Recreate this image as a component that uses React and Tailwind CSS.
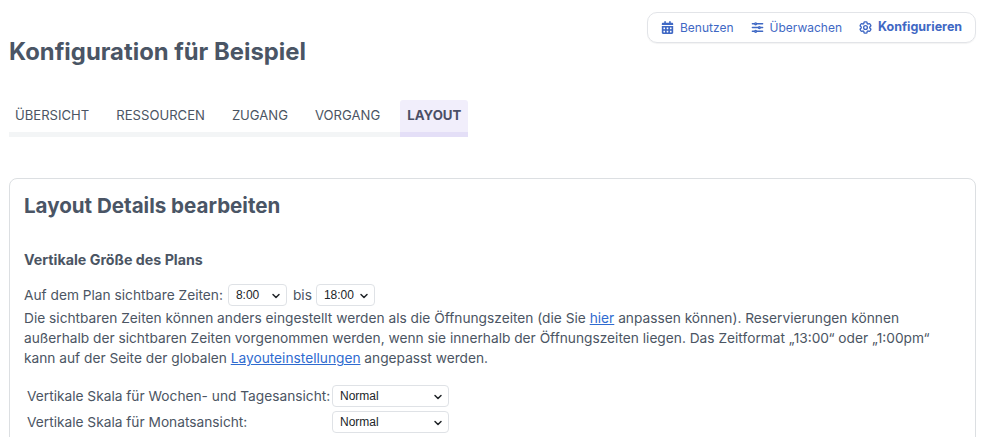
import React from 'react';
import { ChevronDown } from 'lucide-react';
import { FaCalendarDays } from 'react-icons/fa6';
import { HiOutlineAdjustmentsHorizontal, HiOutlineCog6Tooth } from 'react-icons/hi2';

const tabs = ['ÜBERSICHT', 'RESSOURCEN', 'ZUGANG', 'VORGANG'];

const Picker = ({ value, className }) => (
  <span className={`relative inline-block align-middle ${className}`}>
    <select
      defaultValue={value}
      className="appearance-none w-full h-full bg-white border border-[#dfe2e6] rounded-[4px] pl-[7px] text-[12px] text-[#212529] font-['Liberation_Sans',sans-serif] outline-none"
    >
      <option>{value}</option>
    </select>
    <ChevronDown size={12} strokeWidth={3} className="absolute right-[5px] top-[6px] text-[#212529] pointer-events-none" />
  </span>
);

const App = () => {
  return (
    <div className="h-[437px] overflow-hidden bg-white pl-[9px] pr-2 text-[13.72px] text-[#4b5563] font-['Inter',sans-serif]">
      <div className="flex justify-between items-start">
        <h1 className="mt-[37px] text-[23.85px] leading-[29px] font-bold text-[#4a5565]">Konfiguration für Beispiel</h1>
        <nav className="mt-3 h-[31px] w-[329px] flex items-center gap-[16px] pl-[13px] border border-[#e2e4e8] rounded-[10px] shadow-[0_1px_1px_rgba(0,0,0,0.05)] text-[12px] text-[#3f68c4]">
          <span className="flex items-center gap-[6px]"><FaCalendarDays size={13} />Benutzen</span>
          <span className="flex items-center gap-[5px]"><HiOutlineAdjustmentsHorizontal size={15} strokeWidth={2.2} />Überwachen</span>
          <span className="flex items-center gap-[5px] font-bold text-[12.5px]"><HiOutlineCog6Tooth size={15} strokeWidth={2.2} />Konfigurieren</span>
        </nav>
      </div>

      <div className="mt-[34px] w-[459px] h-[37px] flex items-stretch border-b-[5px] border-[#f3f5f6]">
        {tabs.map((tab) => (
          <span key={tab} className="pl-[6px] pr-[21px] flex items-center text-[13.1px] text-[#4b5563]">{tab}</span>
        ))}
        <span className="-mb-[5px] -ml-[1px] px-[7px] flex items-center text-[13.25px] font-bold bg-[#f1eefb] border-b-[5px] border-[#e4dff7] rounded-t-[3px] text-[#4a4e66]">LAYOUT</span>
      </div>

      <section className="mt-[41px] h-[300px] border border-[#dcdfe2] rounded-[8px] pl-[14px] pr-4 pt-[14px]">
        <h2 className="text-[20.55px] leading-[26px] font-bold text-[#4a5565]">Layout Details bearbeiten</h2>
        <h3 className="mt-[32px] text-[14.25px] leading-[18px] font-bold text-[#4b5563]">Vertikale Größe des Plans</h3>

        <div className="mt-[15px] h-[22px] flex items-center">
          <span>Auf dem Plan sichtbare Zeiten:</span>
          <Picker value="8:00" className="ml-[5px] w-[59px] h-[22px]" />
          <span className="ml-[6px] mr-[4px]">bis</span>
          <Picker value="18:00" className="w-[59px] h-[22px]" />
        </div>
        <p className="mt-[2px] leading-[20px] w-[930px]">
          Die sichtbaren Zeiten können anders eingestellt werden als die Öffnungszeiten (die Sie <a href="#" className="text-[#2f6bd0] underline">hier</a> anpassen können). Reservierungen können außerhalb der sichtbaren Zeiten vorgenommen werden, wenn sie innerhalb der Öffnungszeiten liegen. Das Zeitformat „13:00“ oder „1:00pm“ kann auf der Seite der globalen <a href="#" className="text-[#2f6bd0] underline">Layouteinstellungen</a> angepasst werden.
        </p>

        <div className="mt-[17px] grid grid-cols-[305px_117px] gap-y-[4px] pl-[3px] items-center">
          <span className="whitespace-nowrap">Vertikale Skala für Wochen- und Tagesansicht:</span>
          <Picker value="Normal" className="h-[22px] w-[117px]" />
          <span className="whitespace-nowrap">Vertikale Skala für Monatsansicht:</span>
          <Picker value="Normal" className="h-[22px] w-[117px]" />
        </div>
      </section>
    </div>
  );
};

export default App;
